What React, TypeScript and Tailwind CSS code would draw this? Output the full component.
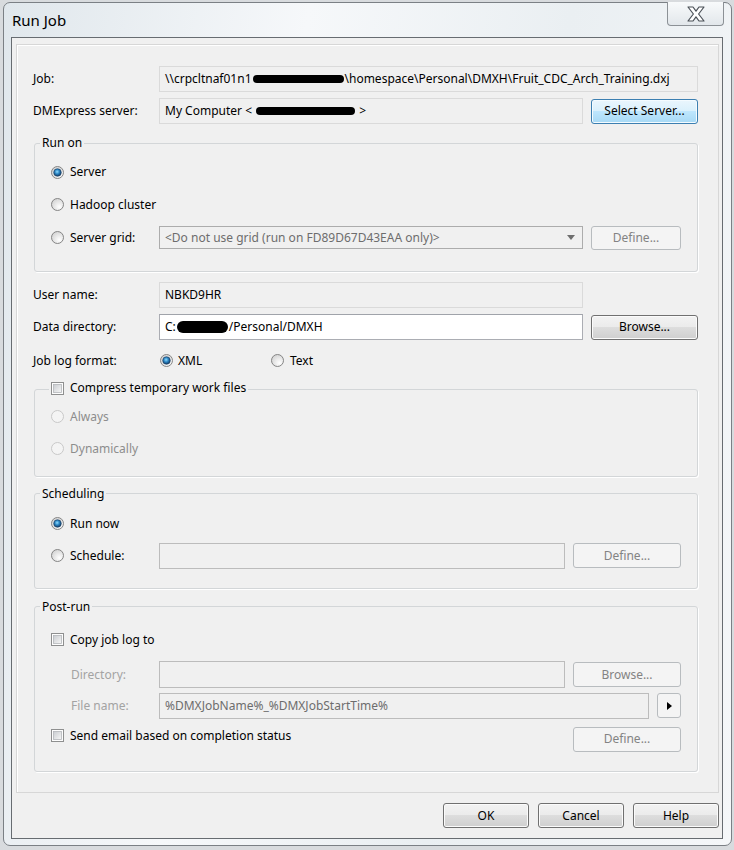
import React from "react";

function Radio({ checked = false, disabled = false }: { checked?: boolean; disabled?: boolean }) {
  return (
    <svg width="13" height="13" viewBox="0 0 13 13" className="shrink-0">
      <defs>
        <radialGradient id="radio-fill" cx="0.65" cy="0.7" r="0.8">
          <stop offset="0" stopColor="#ffffff" />
          <stop offset="1" stopColor="#d0d0d0" />
        </radialGradient>
        <radialGradient id="radio-dot" cx="0.45" cy="0.4" r="0.65">
          <stop offset="0" stopColor="#8fdcff" />
          <stop offset="0.45" stopColor="#2c86c4" />
          <stop offset="1" stopColor="#0b2b52" />
        </radialGradient>
      </defs>
      <circle
        cx="6.5"
        cy="6.5"
        r="6"
        fill={disabled ? "#f4f4f4" : "url(#radio-fill)"}
        stroke={disabled ? "#c8c8c8" : "#858585"}
      />
      {checked && <circle cx="6.5" cy="6.5" r="3.8" fill="url(#radio-dot)" stroke="#1d3f63" strokeWidth="0.6" />}
    </svg>
  );
}

function Checkbox() {
  return (
    <svg width="13" height="13" viewBox="0 0 13 13" className="shrink-0">
      <defs>
        <linearGradient id="check-fill" x1="0" y1="0" x2="1" y2="1">
          <stop offset="0" stopColor="#c9ccd0" />
          <stop offset="1" stopColor="#f7f7f7" />
        </linearGradient>
      </defs>
      <rect x="0.5" y="0.5" width="12" height="12" fill="#fdfdfd" stroke="#8e8f8f" />
      <rect x="2.5" y="2.5" width="8" height="8" fill="url(#check-fill)" stroke="#b3b6ba" strokeWidth="0.8" />
    </svg>
  );
}

function Button({
  children,
  kind = "normal",
  className = "",
}: {
  children: React.ReactNode;
  kind?: "normal" | "default" | "disabled";
  className?: string;
}) {
  const look =
    kind === "default"
      ? "border-[#3c7fb1] bg-[linear-gradient(#eaf6fd,#d9f0fc_50%,#bee6fd_50%,#a7d9f5)] shadow-[inset_0_0_0_1px_#f4fbff] text-black"
      : kind === "disabled"
        ? "border-[#b8bcbf] bg-[#f4f4f4] text-[#838383]"
        : "border-[#707070] bg-[linear-gradient(#f2f2f2,#ebebeb_50%,#dddddd_50%,#cfcfcf)] shadow-[inset_0_0_0_1px_#fbfbfb] text-black";
  return (
    <div className={`flex shrink-0 items-center justify-center rounded-[3px] border ${look} ${className}`}>
      {children}
    </div>
  );
}

function Blob({ w, h = 8 }: { w: number; h?: number }) {
  return (
    <span
      className="mx-[1px] inline-block rounded-full bg-black align-middle"
      style={{ width: w, height: h }}
    />
  );
}

export default function App() {
  return (
    <div className="h-[850px] w-[734px] bg-[#d8dbde] pl-[3px] pt-[2px] font-['Noto_Sans',sans-serif] text-[12px] text-black">
      <div className="flex h-[844px] w-[729px] flex-col rounded-[7px] border border-[#7b8085] bg-[linear-gradient(100deg,#e0e7ec_0%,#f6f8fa_35%,#eaeff2_65%,#f5f7f9_100%)] pb-[6px] pl-[7px] pr-[8px]">
        {/* title bar */}
        <div className="flex h-[34px] items-start justify-between">
          <span className="ml-[1px] mt-[7px] text-[15px] leading-[20px]">Run Job</span>
          <div className="-mr-[1px] -mt-[1px] flex h-[24px] w-[57px] items-center justify-center rounded-b-[4px] border border-t-0 border-[#8c9196] bg-[linear-gradient(#f8fafb,#e2e7eb)]">
            <svg width="20" height="16" viewBox="0 0 20 16">
              <polygon
                points="2,1 7,1 10,5.2 13,1 18,1 12.6,8 18,15 13,15 10,10.8 7,15 2,15 7.4,8"
                fill="#ffffff"
                stroke="#4a5057"
                strokeWidth="1.2"
                strokeLinejoin="round"
              />
            </svg>
          </div>
        </div>

        {/* client area */}
        <div className="flex h-[802px] flex-col border border-[#676c71] bg-[#f0f0f0]">
          <div className="ml-[4px] mr-[3px] mt-[6px] flex h-[749px] flex-col border border-[#d7d7d7] pl-[16px] pr-[20px] pt-[21px] shadow-[inset_1px_1px_0_#ffffff]">
            {/* Job */}
            <div className="flex h-[26px] items-center">
              <div className="w-[126px]">Job:</div>
              <div className="flex h-[26px] flex-1 items-center whitespace-nowrap border border-[#dadada] bg-[#f0f0f0] pl-[5px]">
                \\crpcltnaf01n1
                <Blob w={91} />
                \homespace\Personal\DMXH\Fruit_CDC_Arch_Training.dxj
              </div>
            </div>

            {/* Server */}
            <div className="mt-[6px] flex h-[26px] items-center">
              <div className="w-[126px]">DMExpress server:</div>
              <div className="flex h-[26px] w-[424px] items-center whitespace-nowrap border border-[#dadada] bg-[#f0f0f0] pl-[5px]">
                My Computer &lt;&nbsp;
                <Blob w={99} />
                &nbsp;&gt;
              </div>
              <Button kind="default" className="ml-[8px] h-[25px] w-[107px]">
                Select Server...
              </Button>
            </div>

            {/* Run on */}
            <fieldset className="ml-[1px] mt-[11px] rounded-[3px] border border-[#d3d6d8] p-0 shadow-[1px_1px_0_#ffffff]">
              <legend className="ml-[5px] px-[2px] leading-[16px]">Run on</legend>
              <div className="pb-[17px] pl-[16px] pr-[16px] pt-[5px]">
                <div className="flex h-[32px] items-center">
                  <Radio checked />
                  <span className="ml-[6px]">Server</span>
                </div>
                <div className="flex h-[33px] items-center">
                  <Radio />
                  <span className="ml-[6px]">Hadoop cluster</span>
                </div>
                <div className="flex h-[33px] items-center">
                  <div className="flex w-[108px] items-center">
                    <Radio />
                    <span className="ml-[6px]">Server grid:</span>
                  </div>
                  <div className="flex h-[23px] w-[424px] items-center justify-between border border-[#acacac] bg-[#f0f0f0] pl-[5px] pr-[7px] text-[#6d6d6d]">
                    <span>&lt;Do not use grid (run on FD89D67D43EAA only)&gt;</span>
                    <svg width="8" height="5" viewBox="0 0 8 5">
                      <polygon points="0,0 8,0 4,5" fill="#6e6e6e" />
                    </svg>
                  </div>
                  <Button kind="disabled" className="ml-[8px] h-[24px] w-[90px]">
                    Define...
                  </Button>
                </div>
              </div>
            </fieldset>

            {/* User name */}
            <div className="mt-[10px] flex h-[26px] items-center">
              <div className="w-[126px]">User name:</div>
              <div className="flex h-[26px] w-[424px] items-center border border-[#dadada] bg-[#f0f0f0] pl-[5px]">
                NBKD9HR
              </div>
            </div>

            {/* Data directory */}
            <div className="mt-[6px] flex h-[26px] items-center">
              <div className="w-[126px]">Data directory:</div>
              <div className="flex h-[26px] w-[424px] items-center whitespace-nowrap border border-[#abadb3] border-t-[#a0a3aa] bg-white pl-[5px]">
                C:
                <Blob w={51} h={12} />
                /Personal/DMXH
              </div>
              <Button className="ml-[8px] h-[25px] w-[107px]">Browse...</Button>
            </div>

            {/* Job log format */}
            <div className="mt-[10px] flex h-[21px] items-center">
              <div className="w-[126px]">Job log format:</div>
              <div className="ml-[1px] flex w-[111px] items-center">
                <Radio checked />
                <span className="ml-[5px]">XML</span>
              </div>
              <div className="flex items-center">
                <Radio />
                <span className="ml-[6px]">Text</span>
              </div>
            </div>

            {/* Compress */}
            <fieldset className="ml-[1px] mt-[9px] rounded-[3px] border border-[#d3d6d8] p-0 shadow-[1px_1px_0_#ffffff]">
              <legend className="ml-[14px] px-[2px] leading-[16px]">
                <span className="inline-flex items-center">
                  <Checkbox />
                  <span className="ml-[6px]">Compress temporary work files</span>
                </span>
              </legend>
              <div className="pb-[11px] pl-[16px] pr-[16px] pt-[2px] text-[#8d8d8d]">
                <div className="flex h-[32px] items-center">
                  <Radio disabled />
                  <span className="ml-[6px]">Always</span>
                </div>
                <div className="flex h-[32px] items-center">
                  <Radio disabled />
                  <span className="ml-[6px]">Dynamically</span>
                </div>
              </div>
            </fieldset>

            {/* Scheduling */}
            <fieldset className="ml-[1px] mt-[9px] rounded-[3px] border border-[#d3d6d8] p-0 shadow-[1px_1px_0_#ffffff]">
              <legend className="ml-[5px] px-[2px] leading-[16px]">Scheduling</legend>
              <div className="pb-[16px] pl-[16px] pr-[16px] pt-[6px]">
                <div className="flex h-[32px] items-center">
                  <Radio checked />
                  <span className="ml-[6px]">Run now</span>
                </div>
                <div className="flex h-[32px] items-center">
                  <div className="flex w-[108px] items-center">
                    <Radio />
                    <span className="ml-[6px]">Schedule:</span>
                  </div>
                  <div className="h-[26px] w-[406px] border border-[#bcbcbc] bg-[#f0f0f0]" />
                  <Button kind="disabled" className="ml-[8px] h-[25px] w-[108px]">
                    Define...
                  </Button>
                </div>
              </div>
            </fieldset>

            {/* Post-run */}
            <fieldset className="ml-[1px] mt-[10px] rounded-[3px] border border-[#d3d6d8] p-0 shadow-[1px_1px_0_#ffffff]">
              <legend className="ml-[5px] px-[2px] leading-[16px]">Post-run</legend>
              <div className="pb-[18px] pl-[16px] pr-[16px] pt-[9px]">
                <div className="flex h-[32px] items-center">
                  <Checkbox />
                  <span className="ml-[6px]">Copy job log to</span>
                </div>
                <div className="mt-[4px] flex h-[30px] items-center">
                  <div className="w-[108px] pl-[20px] text-[#a3a3a3]">Directory:</div>
                  <div className="h-[27px] w-[406px] border border-[#bcbcbc] bg-[#f0f0f0]" />
                  <Button kind="disabled" className="ml-[8px] h-[25px] w-[108px]">
                    Browse...
                  </Button>
                </div>
                <div className="flex h-[32px] items-center">
                  <div className="w-[108px] pl-[20px] text-[#a3a3a3]">File name:</div>
                  <div className="flex h-[26px] w-[490px] items-center border border-[#bcbcbc] bg-[#f0f0f0] pl-[5px] text-[#6d6d6d]">
                    %DMXJobName%_%DMXJobStartTime%
                  </div>
                  <div className="ml-[8px] flex h-[25px] w-[24px] items-center justify-center rounded-[3px] border border-[#b8bcbf] bg-[#f4f4f4]">
                    <svg width="5" height="8" viewBox="0 0 5 8">
                      <polygon points="0,0 5,4 0,8" fill="#000000" />
                    </svg>
                  </div>
                </div>
                <div className="mt-[2px] flex h-[29px] items-start">
                  <div className="flex h-[24px] flex-1 items-center">
                    <Checkbox />
                    <span className="ml-[6px]">Send email based on completion status</span>
                  </div>
                  <Button kind="disabled" className="mt-[3px] h-[25px] w-[108px]">
                    Define...
                  </Button>
                </div>
              </div>
            </fieldset>
          </div>

          {/* footer */}
          <div className="flex justify-end gap-[9px] pr-[3px] pt-[10px]">
            <Button className="h-[25px] w-[86px]">OK</Button>
            <Button className="h-[25px] w-[86px]">Cancel</Button>
            <Button className="h-[25px] w-[86px]">Help</Button>
          </div>
        </div>
      </div>
    </div>
  );
}
